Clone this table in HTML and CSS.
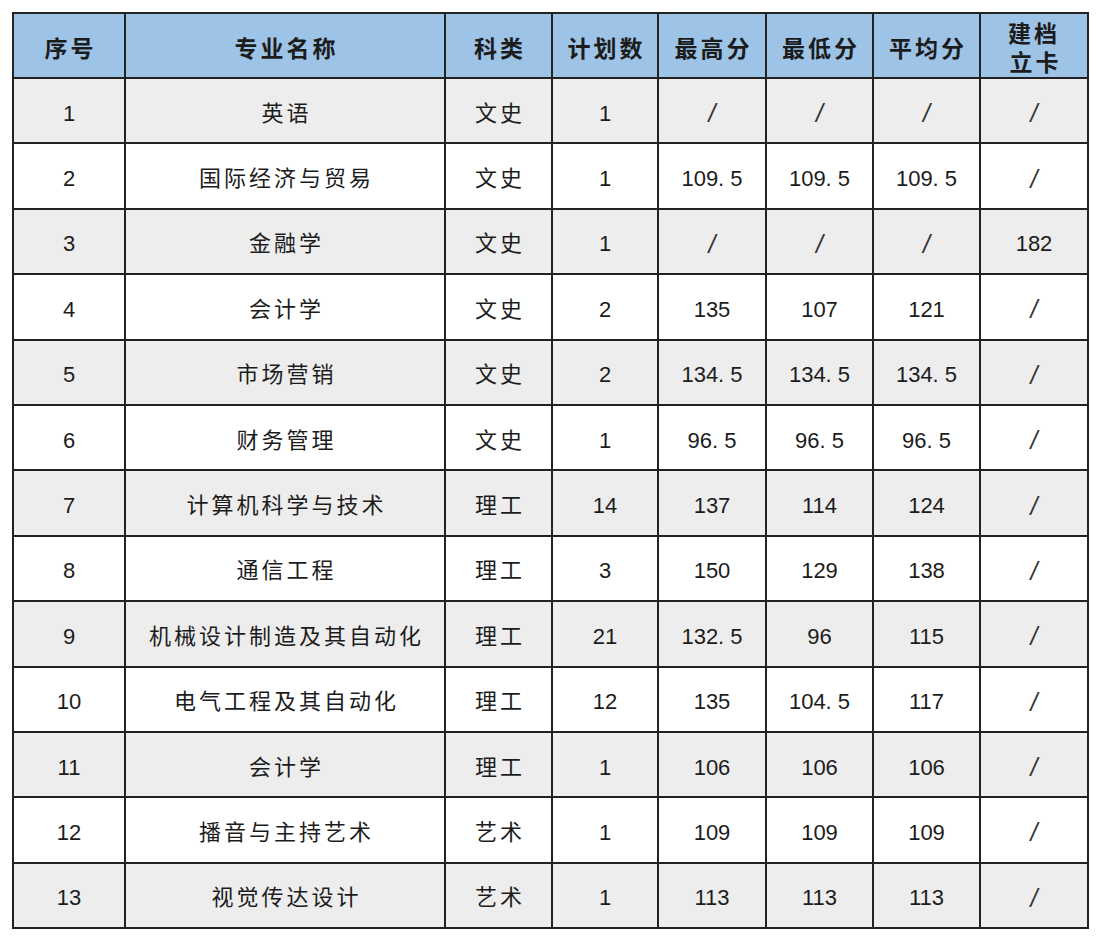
FILE: index.html
```html
<!DOCTYPE html>
<html lang="zh-CN">
<head>
<meta charset="utf-8">
<title>录取分数</title>
<link rel="stylesheet" href="styles.css">
</head>
<body>
<div class="page">
<table class="scores">
  <colgroup>
    <col class="c-no"><col class="c-name"><col class="c-type"><col class="c-plan">
    <col class="c-max"><col class="c-min"><col class="c-avg"><col class="c-card">
  </colgroup>
  <thead>
    <tr>
      <th><span class="cjk">序号</span></th>
      <th><span class="cjk">专业名称</span></th>
      <th><span class="cjk">科类</span></th>
      <th><span class="cjk">计划数</span></th>
      <th><span class="cjk">最高分</span></th>
      <th><span class="cjk">最低分</span></th>
      <th><span class="cjk">平均分</span></th>
      <th><span class="cjk">建档<br>立卡</span></th>
    </tr>
  </thead>
  <tbody>
    <tr class="alt"><td>1</td><td><span class="cjk">英语</span></td><td><span class="cjk">文史</span></td><td>1</td><td class="na">/</td><td class="na">/</td><td class="na">/</td><td class="na">/</td></tr>
    <tr><td>2</td><td><span class="cjk">国际经济与贸易</span></td><td><span class="cjk">文史</span></td><td>1</td><td>109. 5</td><td>109. 5</td><td>109. 5</td><td class="na">/</td></tr>
    <tr class="alt"><td>3</td><td><span class="cjk">金融学</span></td><td><span class="cjk">文史</span></td><td>1</td><td class="na">/</td><td class="na">/</td><td class="na">/</td><td>182</td></tr>
    <tr><td>4</td><td><span class="cjk">会计学</span></td><td><span class="cjk">文史</span></td><td>2</td><td>135</td><td>107</td><td>121</td><td class="na">/</td></tr>
    <tr class="alt"><td>5</td><td><span class="cjk">市场营销</span></td><td><span class="cjk">文史</span></td><td>2</td><td>134. 5</td><td>134. 5</td><td>134. 5</td><td class="na">/</td></tr>
    <tr><td>6</td><td><span class="cjk">财务管理</span></td><td><span class="cjk">文史</span></td><td>1</td><td>96. 5</td><td>96. 5</td><td>96. 5</td><td class="na">/</td></tr>
    <tr class="alt"><td>7</td><td><span class="cjk">计算机科学与技术</span></td><td><span class="cjk">理工</span></td><td>14</td><td>137</td><td>114</td><td>124</td><td class="na">/</td></tr>
    <tr><td>8</td><td><span class="cjk">通信工程</span></td><td><span class="cjk">理工</span></td><td>3</td><td>150</td><td>129</td><td>138</td><td class="na">/</td></tr>
    <tr class="alt"><td>9</td><td><span class="cjk">机械设计制造及其自动化</span></td><td><span class="cjk">理工</span></td><td>21</td><td>132. 5</td><td>96</td><td>115</td><td class="na">/</td></tr>
    <tr><td>10</td><td><span class="cjk">电气工程及其自动化</span></td><td><span class="cjk">理工</span></td><td>12</td><td>135</td><td>104. 5</td><td>117</td><td class="na">/</td></tr>
    <tr class="alt"><td>11</td><td><span class="cjk">会计学</span></td><td><span class="cjk">理工</span></td><td>1</td><td>106</td><td>106</td><td>106</td><td class="na">/</td></tr>
    <tr><td>12</td><td><span class="cjk">播音与主持艺术</span></td><td><span class="cjk">艺术</span></td><td>1</td><td>109</td><td>109</td><td>109</td><td class="na">/</td></tr>
    <tr class="alt"><td>13</td><td><span class="cjk">视觉传达设计</span></td><td><span class="cjk">艺术</span></td><td>1</td><td>113</td><td>113</td><td>113</td><td class="na">/</td></tr>
  </tbody>
</table>
</div>
</body>
</html>
```

FILE: styles.css
```css
html, body {
  margin: 0;
  padding: 0;
  background: #ffffff;
}

.page {
  padding: 12px 0 0 12px;
}

.scores {
  border-collapse: collapse;
  table-layout: fixed;
  width: 1075px;
  font-family: "Liberation Sans", "Noto Sans CJK SC", sans-serif;
  font-size: 22px;
  color: #1c1c1c;
}

.c-no { width: 112px; }
.c-name { width: 320px; }
.c-type { width: 107px; }
.c-plan { width: 106px; }
.c-max { width: 108px; }
.c-min { width: 107px; }
.c-avg { width: 107px; }
.c-card { width: 108px; }

.scores th,
.scores td {
  border: 2px solid #222222;
  text-align: center;
  vertical-align: middle;
  padding: 0;
}

.scores td {
  padding-top: 6px;
}

.scores thead tr {
  height: 65px;
}

.scores th {
  background: #9dc3e6;
  font-family: "Noto Sans CJK SC", sans-serif;
  font-weight: bold;
  font-size: 23px;
  line-height: 29px;
  padding-top: 3px;
}

.scores tbody tr {
  height: 65.4px;
}

.scores tbody tr.alt td {
  background: #ededed;
}

.cjk {
  font-family: "Noto Sans CJK SC", sans-serif;
  letter-spacing: 3px;
  margin-right: -3px;
}

.scores td .cjk {
  position: relative;
  top: -3px;
}

.scores th .cjk {
  font-weight: 700;
}

.na {
  font-family: "Liberation Sans", sans-serif;
  font-style: italic;
  font-size: 25px;
  color: #333333;
}
```
